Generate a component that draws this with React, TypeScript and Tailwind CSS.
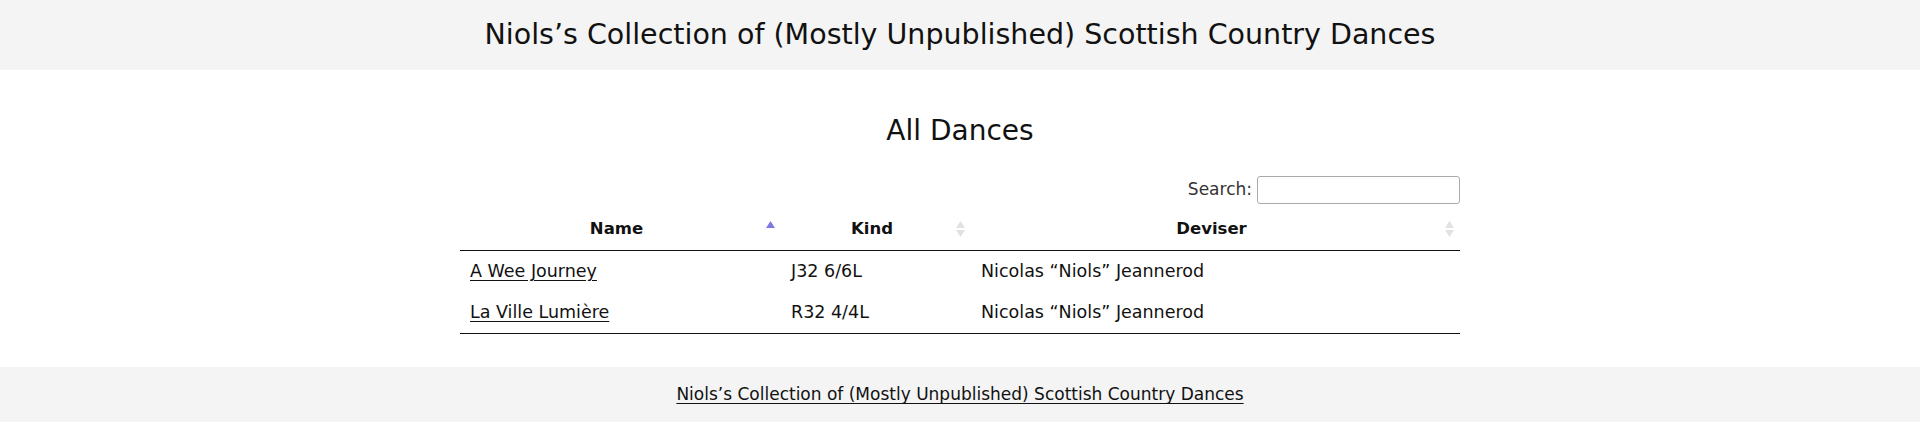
import type { ReactNode } from "react";

const title = "Niols\u2019s Collection of (Mostly Unpublished) Scottish Country Dances";

type Dance = { name: string; kind: string; deviser: string };

const dances: Dance[] = [
  { name: "A Wee Journey", kind: "J32 6/6L", deviser: "Nicolas \u201cNiols\u201d Jeannerod" },
  { name: "La Ville Lumi\u00e8re", kind: "R32 4/4L", deviser: "Nicolas \u201cNiols\u201d Jeannerod" },
];

const SortIcon = ({ active }: { active?: boolean }) => (
  <span className="absolute right-[6px] top-1/2 flex -translate-y-1/2 flex-col items-center gap-[2px]">
    <svg width="9" height="7" viewBox="0 0 9 7">
      <path d="M4.5 0 L9 7 L0 7 Z" fill={active ? "#7a7ae0" : "#e2e2e2"} />
    </svg>
    <svg width="9" height="7" viewBox="0 0 9 7">
      <path d="M0 0 L9 0 L4.5 7 Z" fill={active ? "transparent" : "#e2e2e2"} />
    </svg>
  </span>
);

const Th = ({ children, active, w }: { children: ReactNode; active?: boolean; w: string }) => (
  <th className={`relative ${w} border-b border-[#111] py-[10px] pl-[10px] pr-[18px] text-center text-[16.5px] font-bold leading-[22px]`}>
    {children}
    <SortIcon active={active} />
  </th>
);

export default function App() {
  return (
    <div className="min-h-[422px] bg-white text-[#111]" style={{ fontFamily: '"DejaVu Sans", sans-serif' }}>
      <header className="flex h-[70px] items-center justify-center bg-[#f4f4f4]">
        <h1 className="text-[28.5px] leading-none">{title}</h1>
      </header>

      <main className="mx-auto w-[1000px] pt-[43px]">
        <h2 className="text-center text-[28px] leading-[36px]">All Dances</h2>

        <div className="mt-[27px] flex items-center justify-end gap-[5px] text-[17px] text-[#333]">
          <label htmlFor="search">Search:</label>
          <input id="search" type="search" className="h-[28px] w-[203px] rounded-[3px] border border-[#aaa] bg-white px-1 outline-none" />
        </div>

        <table className="mt-[4px] w-full table-fixed border-collapse">
          <thead>
            <tr>
              <Th w="w-[321px]" active>Name</Th>
              <Th w="w-[190px]">Kind</Th>
              <Th w="w-[489px]">Deviser</Th>
            </tr>
          </thead>
          <tbody className="text-[17.5px]">
            {dances.map((d, i) => (
              <tr key={d.name} className={i === dances.length - 1 ? "border-b border-[#111]" : ""}>
                <td className="px-[10px] py-2 leading-[25px]">
                  <a href="#" className="text-[#111] underline underline-offset-[3px]">{d.name}</a>
                </td>
                <td className="px-[10px] py-2 leading-[25px]">{d.kind}</td>
                <td className="px-[10px] py-2 leading-[25px]">{d.deviser}</td>
              </tr>
            ))}
          </tbody>
        </table>
      </main>

      <footer className="mt-[33px] flex h-[56px] items-center justify-center bg-[#f4f4f4] text-[17px]">
        <a href="#" className="text-[#111] underline underline-offset-[3px]">{title}</a>
      </footer>
    </div>
  );
}
